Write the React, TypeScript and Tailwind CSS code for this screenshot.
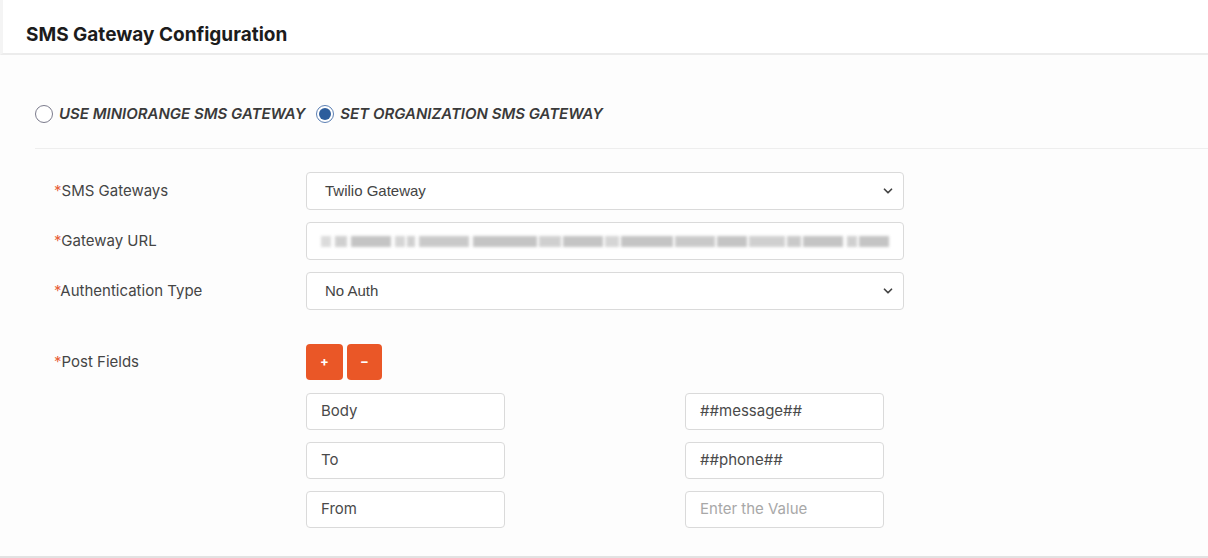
import React from "react";
import { ChevronDown } from "lucide-react";

const inter = { fontFamily: "Inter, 'Noto Sans', sans-serif" };

function Label({ text }: { text: string }) {
  return (
    <div className="w-[252px] shrink-0 text-[15px] text-[#454545]" style={inter}>
      <span className="text-[#e8623a]">*</span>
      {text}
    </div>
  );
}

function Select({ value }: { value: string }) {
  return (
    <div className="w-[598px] h-[38px] border border-[#dadada] rounded-[4px] bg-white flex items-center justify-between pl-[18px] pr-[8px]">
      <span className="text-[15px] text-[#444]" style={{ fontFamily: "'Liberation Sans', Arial, sans-serif" }}>
        {value}
      </span>
      <ChevronDown size={14} strokeWidth={3} className="text-[#444]" />
    </div>
  );
}

function BlurUrl() {
  const segs = [
    [14, 10, 0.6], [28, 12, 0.8], [44, 40, 1], [88, 10, 0.7], [100, 8, 0.8], [112, 50, 0.9],
    [166, 64, 1], [232, 22, 0.8], [256, 40, 1], [298, 14, 0.7], [314, 52, 1], [368, 40, 0.9],
    [410, 30, 1], [442, 36, 0.8], [480, 14, 0.9], [496, 40, 1], [540, 10, 0.8], [552, 30, 1],
  ];
  return (
    <div className="w-[598px] h-[38px] border border-[#dadada] rounded-[4px] bg-white relative overflow-hidden">
      {segs.map(([x, w, o], i) => (
        <div
          key={i}
          className="absolute top-[13px] h-[11px] bg-[#c4c4c4] blur-[1.5px]"
          style={{ left: x, width: w, opacity: o }}
        />
      ))}
    </div>
  );
}

function Field({ value, placeholder }: { value?: string; placeholder?: string }) {
  return (
    <div
      className="w-[199px] h-[37px] border border-[#dadada] rounded-[4px] bg-white flex items-center pl-[14px] text-[15px]"
      style={inter}
    >
      {value ? (
        <span className="text-[#4a4a4a]">{value}</span>
      ) : (
        <span className="text-[#a8a8a8]">{placeholder}</span>
      )}
    </div>
  );
}

function Radio({ checked, label }: { checked?: boolean; label: string }) {
  return (
    <div className="flex items-center gap-[6px]">
      <div
        className={`w-[18px] h-[18px] rounded-full border flex items-center justify-center bg-white ${
          checked ? "border-[#5b7fb3]" : "border-[#7b7b8c]"
        }`}
      >
        {checked && <div className="w-[12px] h-[12px] rounded-full bg-[#2d5d9c]" />}
      </div>
      <span
        className="text-[15px] italic font-semibold text-[#3a3a3a] uppercase tracking-[0px]"
        style={inter}
      >
        {label}
      </span>
    </div>
  );
}

export default function App() {
  return (
    <div className="w-[1208px] h-[558px] bg-white border-b-2 border-[#e2e2e2] overflow-hidden">
      <div className="h-[55px] flex items-center pt-[16px] pl-[23px] border-b-2 border-[#ececec] border-l-[3px] border-l-[#f4f4f4]">
        <h1 className="text-[19px] font-bold text-[#1c1c1c] leading-[24px]" style={inter}>
          SMS Gateway Configuration
        </h1>
      </div>
      <div className="pl-[35px] bg-[#fdfdfd] h-[501px]">
        <div className="pt-[49px] pb-[24px] flex items-center gap-[11px] border-b border-[#eeeeee] leading-[20px]">
          <Radio label="Use miniOrange SMS Gateway" />
          <Radio checked label="Set Organization SMS Gateway" />
        </div>
        <div className="pl-[19px] pt-[23px] flex flex-col">
          <div className="flex flex-col gap-[12px]">
            <div className="flex items-center h-[38px]">
              <Label text="SMS Gateways" />
              <Select value="Twilio Gateway" />
            </div>
            <div className="flex items-center h-[38px]">
              <Label text="Gateway URL" />
              <BlurUrl />
            </div>
            <div className="flex items-center h-[38px]">
              <Label text="Authentication Type" />
              <Select value="No Auth" />
            </div>
          </div>
          <div className="flex mt-[34px]">
            <div className="h-[36px] flex items-center">
              <Label text="Post Fields" />
            </div>
            <div className="flex flex-col">
              <div className="flex gap-[4px]">
                <button className="w-[37px] h-[36px] rounded-[4px] bg-[#ea5727] text-white text-[13px] font-bold flex items-center justify-center" style={inter}>
                  +
                </button>
                <button className="w-[35px] h-[36px] rounded-[4px] bg-[#ea5727] text-white text-[13px] font-bold flex items-center justify-center" style={inter}>
                  −
                </button>
              </div>
              <div className="mt-[13px] grid grid-cols-[199px_199px] gap-x-[180px] gap-y-[12px]">
                <Field value="Body" />
                <Field value="##message##" />
                <Field value="To" />
                <Field value="##phone##" />
                <Field value="From" />
                <Field placeholder="Enter the Value" />
              </div>
            </div>
          </div>
        </div>
      </div>
    </div>
  );
}
